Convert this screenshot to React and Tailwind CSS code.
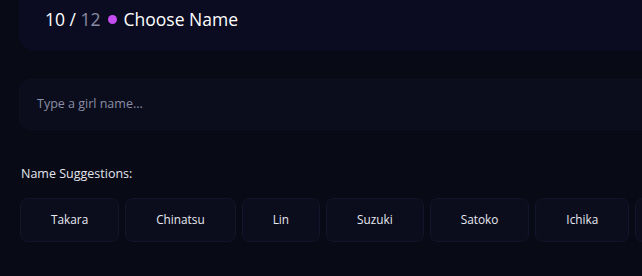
import React from 'react';

const names = ['Takara', 'Chinatsu', 'Lin', 'Suzuki', 'Satoko', 'Ichika', 'Yume'];

function App() {
    return (
        <div className="w-[642px] h-[276px] overflow-hidden bg-[#080a16] text-white" style={{ fontFamily: '"Open Sans", "Noto Sans", sans-serif' }}>
            <div className="pl-[19px] w-[720px]">
                <div className="h-[51px] rounded-b-2xl bg-[#0b0c22] pl-[26px] pt-[6px] flex items-start">
                    <div className="flex items-center gap-[7px] text-[17.5px] leading-[26px]">
                        <span>
                            10 / <span className="text-[#8b8ca3]">12</span>
                        </span>
                        <span className="w-[9px] h-[9px] rounded-full bg-[#c44cf0]"></span>
                        <span>Choose Name</span>
                    </div>
                </div>

                <div className="mt-[28px] h-[51px] rounded-xl bg-[#0b0d1c] border border-[#0e1022] flex items-center pl-[17px]">
                    <span className="text-[12.5px] text-[#8a8ea6]">Type a girl name...</span>
                </div>

                <p className="mt-[35px] pl-[2px] text-[12.5px] text-[#e4e6ee]">Name Suggestions:</p>

                <div className="mt-[14px] pl-[1px] flex gap-[6px]">
                    {names.map((name) => (
                        <button key={name} className="shrink-0 h-[44px] px-[30px] rounded-lg bg-[#0b0d1c] border border-[#13152a] text-[11.8px] text-[#e8e9f2]">
                            {name}
                        </button>
                    ))}
                </div>
            </div>
        </div>
    );
}

export default App;
